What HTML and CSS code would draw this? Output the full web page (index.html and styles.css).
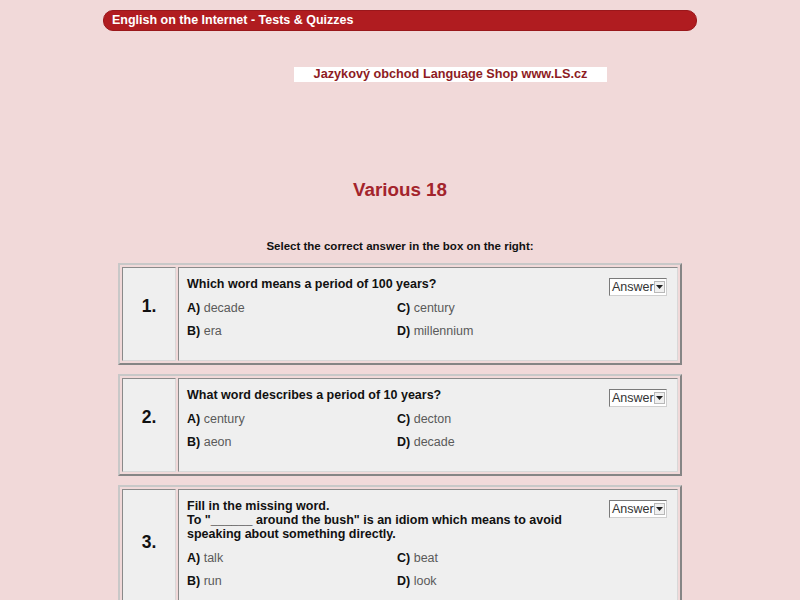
FILE: index.html
```html
<!DOCTYPE html>
<html>
<head>
<meta charset="utf-8">
<link rel="stylesheet" href="styles.css">
</head>
<body>
<div class="header">English on the Internet - Tests &amp; Quizzes</div>
<div class="shop-wrap"><a class="shop">Jazykový obchod Language Shop www.LS.cz</a></div>
<h1 class="title">Various 18</h1>
<p class="instr">Select the correct answer in the box on the right:</p>

<table class="quiz">
<tr>
<td class="num">1.</td>
<td class="body">
<div class="content">
<div class="main">
<div class="q">Which word means a period of 100 years?</div>
<div class="opts">
<div><b>A)</b> decade</div><div><b>C)</b> century</div>
<div><b>B)</b> era</div><div><b>D)</b> millennium</div>
</div>
</div>
<div class="sel"><span class="sel-text">Answer</span><span class="sel-btn"><svg width="7" height="4" viewBox="0 0 7 4"><path d="M0 0h7L3.5 4z" fill="#222"/></svg></span></div>
</div>
</td>
</tr>
</table>

<table class="quiz">
<tr>
<td class="num">2.</td>
<td class="body">
<div class="content">
<div class="main">
<div class="q">What word describes a period of 10 years?</div>
<div class="opts">
<div><b>A)</b> century</div><div><b>C)</b> decton</div>
<div><b>B)</b> aeon</div><div><b>D)</b> decade</div>
</div>
</div>
<div class="sel"><span class="sel-text">Answer</span><span class="sel-btn"><svg width="7" height="4" viewBox="0 0 7 4"><path d="M0 0h7L3.5 4z" fill="#222"/></svg></span></div>
</div>
</td>
</tr>
</table>

<table class="quiz">
<tr>
<td class="num">3.</td>
<td class="body">
<div class="content">
<div class="main">
<div class="q">Fill in the missing word.<br>To "______ around the bush" is an idiom which means to avoid speaking about something directly.</div>
<div class="opts">
<div><b>A)</b> talk</div><div><b>C)</b> beat</div>
<div><b>B)</b> run</div><div><b>D)</b> look</div>
</div>
</div>
<div class="sel"><span class="sel-text">Answer</span><span class="sel-btn"><svg width="7" height="4" viewBox="0 0 7 4"><path d="M0 0h7L3.5 4z" fill="#222"/></svg></span></div>
</div>
</td>
</tr>
</table>
</body>
</html>
```
FILE: styles.css
```css
html, body {
  margin: 0;
  padding: 0;
  background: #f1d9d9;
  font-family: "Liberation Sans", Arial, sans-serif;
  color: #111;
}
body {
  padding-top: 10px;
  padding-bottom: 40px;
}
.header {
  width: 594px;
  height: 21px;
  box-sizing: border-box;
  margin: 0 auto;
  background: #b01c20;
  border: 1px solid #9a171b;
  border-radius: 10px;
  color: #fff;
  font-weight: bold;
  font-size: 12.5px;
  line-height: 19px;
  padding-left: 8px;
}
.shop-wrap {
  margin-top: 36px;
  padding-left: 294px;
  height: 15px;
}
.shop {
  display: block;
  width: 313px;
  height: 15px;
  background: #fff;
  color: #8e1b23;
  font-weight: bold;
  font-size: 12.7px;
  line-height: 15px;
  text-align: center;
}
.title {
  margin: 96px 0 0;
  text-align: center;
  font-size: 18.8px;
  line-height: 24px;
  color: #a3242c;
  font-weight: bold;
}
.instr {
  margin: 37px 0 0;
  text-align: center;
  font-size: 11.5px;
  line-height: 14px;
  font-weight: bold;
  color: #111;
}
.quiz {
  width: 564px;
  table-layout: fixed;
  margin: 10px auto 9px;
  border-collapse: separate;
  border-spacing: 2px;
  border: 2px solid;
  border-color: #c8c8c8 #858585 #858585 #c8c8c8;
  background: #f1d9d9;
}
.quiz + .quiz { margin-top: 0; }
.quiz td {
  background: #efefef;
  border: 1px solid;
  border-color: #8a8a8a #d8d8d8 #d8d8d8 #8a8a8a;
  vertical-align: middle;
  padding: 0;
}
.quiz td.num {
  width: 52px;
  text-align: center;
  font-weight: bold;
  font-size: 17.5px;
  padding-bottom: 15px;
}
.quiz td.body {
  vertical-align: top;
}
.content {
  display: flex;
  gap: 6px;
  padding: 9px 10px 17px 8px;
}
.main { flex: 1; }
.q {
  font-size: 12.5px;
  line-height: 14px;
  font-weight: bold;
  color: #111;
}
.opts {
  margin-top: 6px;
  display: grid;
  grid-template-columns: 210px 1fr;
  grid-auto-rows: 23px;
  font-size: 12.5px;
  line-height: 23px;
  color: #5a5a5a;
}
.opts b { color: #111; }
.sel {
  margin-top: 1px;
  width: 58px;
  height: 18px;
  box-sizing: border-box;
  border: 1px solid;
  border-color: #7a7a7a #cfcfcf #cfcfcf #7a7a7a;
  background: #fff;
  display: flex;
  align-items: center;
  justify-content: space-between;
  padding: 0 1px 0 2px;
  font-size: 12.5px;
  color: #333;
  align-self: flex-start;
  flex: none;
}
.sel-btn {
  width: 11px;
  height: 12px;
  display: flex;
  align-items: center;
  justify-content: center;
  background: #f0f0f0;
  border: 1px solid #b8b8b8;
  box-sizing: border-box;
}
```
